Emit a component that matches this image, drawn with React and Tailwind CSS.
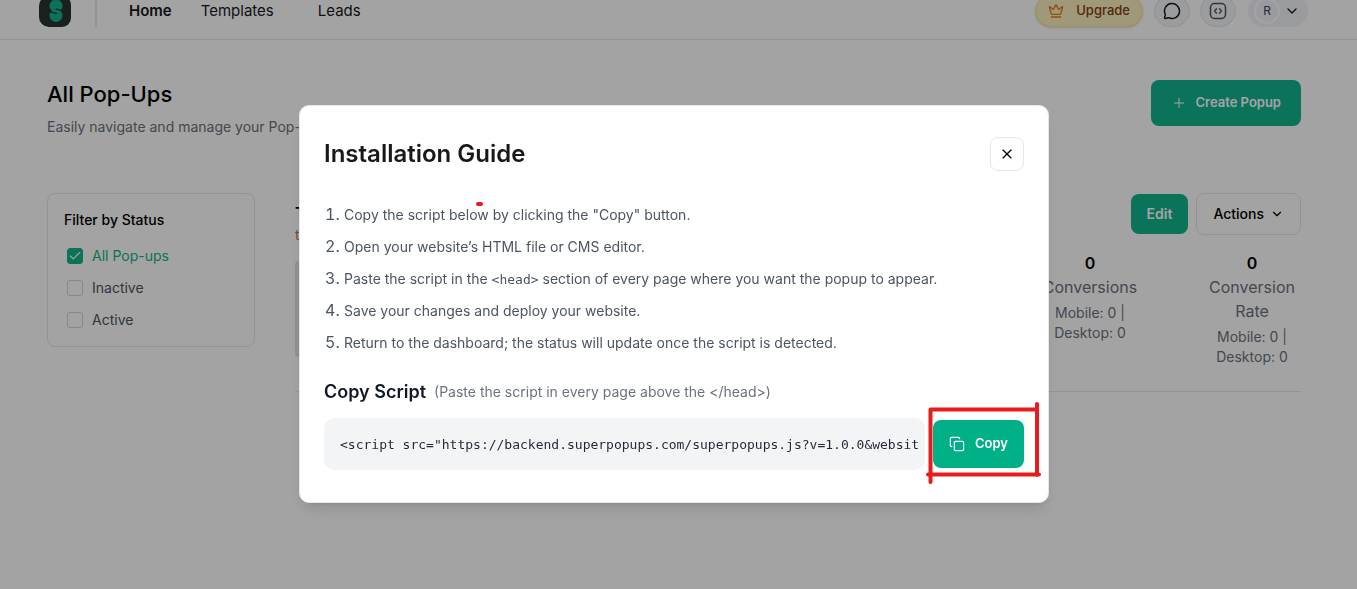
import React, { useState } from "react";
import { Check, ChevronDown, Copy, Crown, MessageCircle, Plus, X } from "lucide-react";

const filters = ["All Pop-ups", "Inactive", "Active"];

const script =
  '<script src="https://backend.superpopups.com/superpopups.js?v=1.0.0&websit';

function Logo() {
  return (
    <svg viewBox="0 0 32 32" className="size-8 shrink-0" aria-label="Superpopups">
      <path
        d="M11 0h11a10 10 0 0 1 10 10v13a9 9 0 0 1-9 9H10A10 10 0 0 1 0 22V12C0 5 5 0 11 0Z"
        fill="#28332f"
      />
      <circle cx="17" cy="11" r="6.5" fill="#10b48e" />
      <circle cx="17" cy="20.5" r="6.5" fill="#10b48e" />
      <path
        d="M24 15.500c-2.500 0-4.500-.6-7-1.500M10 15.500c2 1.800 4.500 2.500 7.500 3"
        fill="none"
        stroke="#28332f"
        strokeWidth="1.2"
        strokeLinecap="round"
      />
    </svg>
  );
}

function CodeIcon() {
  return (
    <svg viewBox="0 0 18 18" className="size-[18px]" fill="none" stroke="currentColor" strokeLinecap="round" strokeLinejoin="round">
      <rect x="1.5" y="1.5" width="15" height="15" rx="4" strokeWidth="1.5" />
      <path d="M7.500 6.800 5.500 9l2 2.200M10.500 6.800l2 2.200-2 2.200" strokeWidth="1.3" />
    </svg>
  );
}

function Header() {
  return (
    <header className="flex h-10 items-center overflow-hidden border-b border-[#e5e7eb] pr-[49px] pb-[18px] pl-[39px]">
      <Logo />
      <div className="ml-6 h-8 w-0.5 shrink-0 bg-[#e5e7eb]" />
      <nav className="ml-8 flex items-center pt-0.5 text-[15px] text-[#18181b]">
        <a href="#home" className="font-semibold">Home</a>
        <a href="#templates" className="ml-[29px]">Templates</a>
        <a href="#leads" className="ml-11">Leads</a>
      </nav>
      <div className="ml-auto flex items-center">
        <button className="flex h-8 items-center gap-3 rounded-full border border-[#f3e28a] bg-[#fbf0bd] px-3 text-[13px] font-medium text-[#7c4214] shadow-sm">
          <Crown size={16} className="text-[#e07a1f]" />
          Upgrade
        </button>
        <button aria-label="Chat" className="ml-[11px] flex h-8 w-9 items-center justify-center rounded-full border border-[#e2e4e8] bg-[#f3f4f6] text-[#18181b]">
          <MessageCircle size={18} />
        </button>
        <button aria-label="Install code" className="ml-2.5 flex h-8 w-9 items-center justify-center rounded-full border border-[#e2e4e8] bg-[#f3f4f6] text-[#4b5563]">
          <CodeIcon />
        </button>
        <button className="ml-3 flex h-8 items-center gap-1 rounded-full bg-[#f1f3f7] pr-2 pl-1.5 text-xs text-[#374151]">
          <span className="flex size-[26px] items-center justify-center rounded-full border-2 border-white">R</span>
          <ChevronDown size={16} className="text-[#18181b]" />
        </button>
      </div>
    </header>
  );
}

function StatusFilter() {
  const [selected, setSelected] = useState("All Pop-ups");

  return (
    <aside className="w-[208px] shrink-0 self-start rounded-lg border border-[#e5e7eb] px-4 pt-4 pb-2.5">
      <h2 className="text-sm leading-5 font-medium text-black">Filter by Status</h2>
      <div className="mt-2.5">
        {filters.map((name) => (
          <label
            key={name}
            className={`flex h-8 items-center gap-2 pl-0.5 text-sm ${
              selected === name ? "text-[#12b38a]" : "text-[#4b5563]"
            }`}
          >
            <span className="relative flex size-[18px] items-center justify-center">
              <input
                type="checkbox"
                checked={selected === name}
                onChange={() => setSelected(name)}
                className="size-4 appearance-none rounded-[3px] border border-[#d1d5db] checked:border-[#10b48e] checked:bg-[#10b48e]"
              />
              {selected === name && (
                <Check size={14} className="pointer-events-none absolute top-0.5 left-0.5 text-white" />
              )}
            </span>
            {name}
          </label>
        ))}
      </div>
    </aside>
  );
}

function Stat({ value, label }) {
  return (
    <div className="w-[98px] text-center">
      <p className="text-base leading-6 font-semibold text-black">{value}</p>
      <p className="text-base leading-6 text-[#6b7280]">{label}</p>
      <p className="mt-1 text-sm leading-5 text-[#6b7280]">Mobile: 0 | Desktop: 0</p>
    </div>
  );
}

function PopupRow() {
  return (
    <section className="flex h-[199px] flex-1 justify-between border-b border-[#e5e7eb]">
      <div className="pt-2">
        <h3 className="text-base leading-6 font-semibold text-black">T1</h3>
        <p className="text-sm text-[#c2703d]">t1</p>
        <div className="mt-4 h-24 w-40 rounded-sm bg-[#e2e3e8]" />
      </div>
      <div className="flex flex-col items-end">
        <div className="flex items-center gap-2">
          <button className="h-10 rounded-lg bg-[#10b48e] px-4 text-sm font-semibold text-white">Edit</button>
          <button className="flex h-[42px] items-center gap-1.5 rounded-lg border border-[#e5e7eb] px-4 text-sm font-medium text-black">
            Actions
            <ChevronDown size={14} />
          </button>
        </div>
        <div className="mt-4 flex gap-16">
          <Stat value="0" label="Conversions" />
          <Stat value="0" label="Conversion Rate" />
        </div>
      </div>
    </section>
  );
}

function Annotations() {
  return (
    <svg
      viewBox="0 0 120 90"
      className="pointer-events-none absolute -top-5 -left-2 h-[90px] w-[120px]"
      stroke="#e81c1c"
      strokeWidth="4"
      strokeLinecap="round"
      fill="none"
    >
      <path d="M5.500 10V82M5.500 9.500H112M112 4V75M3 74.500H114" />
    </svg>
  );
}

function InstallationGuide() {
  return (
    <div className="fixed inset-0 flex items-start justify-center bg-black/36 pt-[105px] pr-[9px]">
      <div
        role="dialog"
        aria-label="Installation Guide"
        className="w-[750px] rounded-[10px] border border-[#e5e7eb] bg-white px-6 pt-[31px] pb-8 shadow-lg"
      >
        <div className="flex items-center justify-between">
          <h2 className="text-2xl font-semibold text-[#18181b]">Installation Guide</h2>
          <button aria-label="Close" className="flex size-[34px] items-center justify-center rounded-lg border border-[#e5e7eb] text-black">
            <X size={16} strokeWidth={1.75} />
          </button>
        </div>

        <ol className="relative mt-[27px] list-outside list-decimal pl-5 text-base leading-8 text-[#4b5563]">
          <li><span className="text-sm">Copy the script below by clicking the "Copy" button.</span></li>
          <li><span className="text-sm">Open your website’s HTML file or CMS editor.</span></li>
          <li>
            <span className="text-sm">
              Paste the script in the <code className="font-['DejaVu_Sans_Mono',monospace] text-[13px]">&lt;head&gt;</code> section
              of every page where you want the popup to appear.
            </span>
          </li>
          <li><span className="text-sm">Save your changes and deploy your website.</span></li>
          <li><span className="text-sm">Return to the dashboard; the status will update once the script is detected.</span></li>
          <span aria-hidden="true" className="absolute top-1 left-[152px] h-1 w-[7px] rounded-full bg-[#e81c1c]" />
        </ol>

        <div className="mt-5 flex items-center gap-2">
          <h3 className="text-lg font-semibold text-[#111827]">Copy Script</h3>
          <span className="text-sm text-[#6b7280]">(Paste the script in every page above the &lt;/head&gt;)</span>
        </div>
        <div className="mt-3 flex items-center gap-2">
          <input
            readOnly
            aria-label="Script"
            value={script}
            className="h-[52px] min-w-0 flex-1 rounded-[10px] bg-[#f3f4f6] pr-1 pl-4 font-['DejaVu_Sans_Mono',monospace] text-[13px] text-[#1f2937]"
          />
          <div className="relative">
            <button className="flex h-12 items-center gap-2.5 rounded-lg bg-[#00b087] px-4 text-[13px] font-semibold text-white">
              <Copy size={16} strokeWidth={1.75} />
              Copy
            </button>
            <Annotations />
          </div>
        </div>
      </div>
    </div>
  );
}

function App() {
  return (
    <div className="min-h-screen bg-white font-['Inter',sans-serif]">
      <Header />
      <main className="pt-9 pr-14 pl-[47px]">
        <div className="flex items-start justify-between">
          <div className="pt-0.5">
            <h1 className="text-[22px] leading-8 font-medium text-black">All Pop-Ups</h1>
            <p className="mt-[7px] text-sm text-[#6b7280]">Easily navigate and manage your Pop-Ups</p>
          </div>
          <button className="mt-1 flex h-[46px] items-center gap-2 rounded-lg bg-[#10b48e] px-5 text-[13px] font-semibold text-white">
            <Plus size={16} strokeWidth={1.5} />
            Create Popup
          </button>
        </div>
        <div className="mt-14 flex gap-10">
          <StatusFilter />
          <PopupRow />
        </div>
      </main>
      <InstallationGuide />
    </div>
  );
}

export default App;
